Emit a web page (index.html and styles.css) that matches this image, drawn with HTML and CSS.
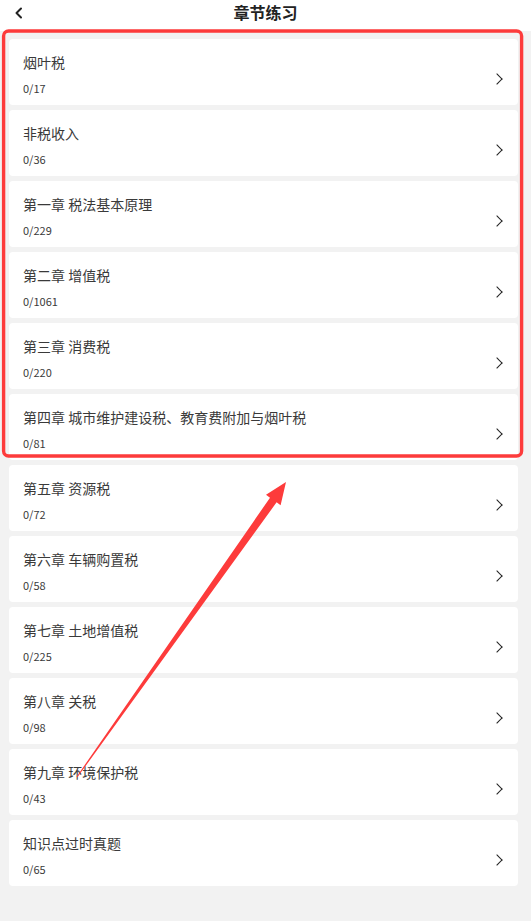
FILE: index.html
```html
<!DOCTYPE html>
<html lang="zh-CN">
<head>
<meta charset="utf-8">
<title>章节练习</title>
<link rel="stylesheet" href="styles.css">
</head>
<body>
<div class="page">
  <header class="topbar">
    <span class="back">
      <svg width="10" height="12" viewBox="0 0 10 12"><path d="M7 1.5 L2.5 6 L7 10.5" fill="none" stroke="#222" stroke-width="2" stroke-linecap="round" stroke-linejoin="round"/></svg>
    </span>
    <h1 class="title">章节练习</h1>
  </header>
  <ul class="list">
    <li class="card"><div class="info"><div class="name">烟叶税</div><div class="count">0/17</div></div><span class="chev"></span></li>
    <li class="card"><div class="info"><div class="name">非税收入</div><div class="count">0/36</div></div><span class="chev"></span></li>
    <li class="card"><div class="info"><div class="name">第一章 税法基本原理</div><div class="count">0/229</div></div><span class="chev"></span></li>
    <li class="card"><div class="info"><div class="name">第二章 增值税</div><div class="count">0/1061</div></div><span class="chev"></span></li>
    <li class="card"><div class="info"><div class="name">第三章 消费税</div><div class="count">0/220</div></div><span class="chev"></span></li>
    <li class="card"><div class="info"><div class="name">第四章 城市维护建设税、教育费附加与烟叶税</div><div class="count">0/81</div></div><span class="chev"></span></li>
    <li class="card"><div class="info"><div class="name">第五章 资源税</div><div class="count">0/72</div></div><span class="chev"></span></li>
    <li class="card"><div class="info"><div class="name">第六章 车辆购置税</div><div class="count">0/58</div></div><span class="chev"></span></li>
    <li class="card"><div class="info"><div class="name">第七章 土地增值税</div><div class="count">0/225</div></div><span class="chev"></span></li>
    <li class="card"><div class="info"><div class="name">第八章 关税</div><div class="count">0/98</div></div><span class="chev"></span></li>
    <li class="card"><div class="info"><div class="name">第九章 环境保护税</div><div class="count">0/43</div></div><span class="chev"></span></li>
    <li class="card"><div class="info"><div class="name">知识点过时真题</div><div class="count">0/65</div></div><span class="chev"></span></li>
  </ul>
  <svg class="annot" width="531" height="921" viewBox="0 0 531 921">
    <rect x="3.6" y="31" width="518" height="425" rx="5" ry="5" fill="none" stroke="#fd3b3b" stroke-width="3.4"/>
    <polygon points="286,482 280.6,505.2 276.6,502.3 77.4,777.3 76.6,776.7 270,497.7 266,494.8" fill="#fd3b3b"/>
  </svg>
</div>
</body>
</html>
```
FILE: styles.css
```css
* { box-sizing: border-box; }
html, body { margin: 0; padding: 0; }
body {
  background: #f2f2f2;
  font-family: "Noto Sans CJK SC", "Noto Sans", sans-serif;
  color: #333;
}
.page {
  position: relative;
  width: 531px;
  min-height: 921px;
}
.topbar {
  position: relative;
  height: 31px;
  background: #fff;
  display: flex;
  align-items: center;
  justify-content: center;
}
.back {
  position: absolute;
  left: 14px;
  top: 7px;
  display: flex;
}
.title {
  margin: 0;
  margin-top: -8px;
  font-size: 16px;
  font-weight: 700;
  color: #222;
  line-height: 20px;
}
.list {
  list-style: none;
  margin: 0;
  padding: 8px 13px 0 9px;
  display: flex;
  flex-direction: column;
  gap: 5px;
}
.card {
  height: 66px;
  background: #fff;
  border-radius: 4px;
  display: flex;
  align-items: flex-start;
  padding: 0 17px 0 14px;
}
.info {
  flex: 1;
  padding-top: 13px;
}
.name {
  font-size: 14px;
  line-height: 20px;
  color: #3a3a3a;
}
.count {
  margin-top: 9px;
  font-size: 11px;
  line-height: 14px;
  color: #3a3a3a;
}
.chev {
  margin-top: 36px;
  width: 8px;
  height: 8px;
  border-top: 1.7px solid #222;
  border-right: 1.7px solid #222;
  transform: rotate(45deg);
}
.annot {
  position: absolute;
  left: 0;
  top: 0;
  pointer-events: none;
}
```
